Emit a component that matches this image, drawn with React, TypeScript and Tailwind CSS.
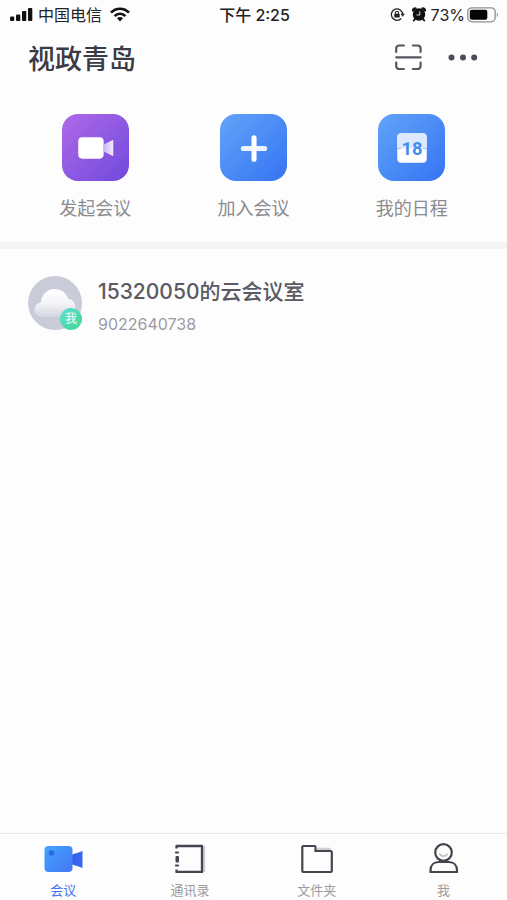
import React from 'react'

function SignalIcon() {
  return (
    <svg className="h-4 w-6" viewBox="0 0 24 16" fill="#111" aria-hidden="true">
      <rect x="0" y="9.5" width="4.3" height="4.5" rx="1" />
      <rect x="6" y="7.5" width="4.3" height="6.500" rx="1" />
      <rect x="12" y="4" width="4.3" height="10" rx="1" />
      <rect x="18" y="1" width="4.3" height="13" rx="1" />
    </svg>
  )
}

function WifiIcon() {
  return (
    <svg className="h-4 w-5" viewBox="0 0 20 16" fill="none" stroke="#111" strokeWidth="2.6" aria-hidden="true">
      <path d="M1 5.7C6 .4 14 .4 19 5.7" />
      <path d="M4.6 9.1c3-3.1 7.8-3.1 10.8 0" />
      <path d="M10 14.500l-3-3.3c1.700-1.500 4.300-1.500 6 0z" fill="#111" stroke="none" />
    </svg>
  )
}

function RotationLockIcon() {
  return (
    <svg className="h-4 w-4" viewBox="0 0 16 16" fill="none" stroke="#222" strokeWidth="1.3" aria-hidden="true">
      <path d="M12.2 11.500a5.700 5.700 0 1 1 1.500-4.200" />
      <path d="M11.500 6.800h4.300l-2.100 2.900z" fill="#222" stroke="none" />
      <rect x="5.300" y="6.800" width="5.400" height="3.800" rx=".6" fill="#222" stroke="none" />
      <path d="M6.500 7V5.800a1.500 1.500 0 0 1 3 0V7" strokeWidth="1.1" />
    </svg>
  )
}

function AlarmIcon() {
  return (
    <svg className="h-4 w-4" viewBox="0 0 16 16" fill="#111" aria-hidden="true">
      <circle cx="8" cy="7.500" r="6.200" />
      <path d="M1.800 5a2.600 2.600 0 0 1 4.200-3.700zM14.200 5A2.600 2.600 0 0 0 10 1.300z" />
      <path d="M4 12l-1.200 1.500M12 12l1.200 1.500" stroke="#111" strokeWidth="2" strokeLinecap="round" />
      <path d="M8.800 4.300v3.700H5.600" fill="none" stroke="#ddd" strokeWidth="1" />
    </svg>
  )
}

function BatteryIcon() {
  return (
    <svg className="h-4 w-8" viewBox="0 0 32 16" aria-hidden="true">
      <rect x=".8" y=".8" width="27.4" height="14" rx="4.2" fill="none" stroke="#8f8f8f" strokeWidth="1.3" />
      <rect x="2.8" y="2.800" width="17.5" height="10" rx="2" fill="#050505" />
      <path d="M29.8 5.500c1.800.8 1.800 3.600 0 4.400z" fill="#999" />
    </svg>
  )
}

function ScanIcon() {
  return (
    <svg className="h-7 w-7" viewBox="0 0 28 28" fill="none" stroke="#55555f" strokeWidth="2.2" strokeLinecap="round" aria-hidden="true">
      <path d="M1.200 8V4.500a3 3 0 0 1 3-3h4.700M17.900 1.500h4.700a3 3 0 0 1 3 3V8M1.200 18.500V22a3 3 0 0 0 3 3h4.700M17.900 25h4.700a3 3 0 0 0 3-3v-3.500" />
      <path d="M1.200 13.300h24.400" />
    </svg>
  )
}

function MoreIcon() {
  return (
    <svg className="h-7 w-8" viewBox="0 0 32 28" fill="#4c4c56" aria-hidden="true">
      <circle cx="4.500" cy="13.500" r="3" />
      <circle cx="16" cy="13.500" r="3" />
      <circle cx="27.200" cy="13.500" r="3" />
    </svg>
  )
}

function StartIcon() {
  return (
    <svg className="h-full w-full" viewBox="0 0 66 66" aria-hidden="true">
      <defs>
        <linearGradient id="lens" x1="0" y1="0" x2="1" y2="0">
          <stop offset="0" stopColor="#c9b4f2" />
          <stop offset="1" stopColor="#f3edfd" />
        </linearGradient>
      </defs>
      <rect x="16" y="23" width="25" height="21" rx="4" fill="#fff" />
      <path d="M41 30l8.500-4.200c.6-.3 1 0 1 .6v14.200c0 .6-.4.9-1 .6L41 37z" fill="url(#lens)" />
    </svg>
  )
}

function JoinIcon() {
  return (
    <svg className="h-full w-full" viewBox="0 0 66 66" stroke="#fff" strokeWidth="5" strokeLinecap="round" aria-hidden="true">
      <path d="M23 34h21" opacity=".9" />
      <path d="M33.500 23.500v21" />
    </svg>
  )
}

function ScheduleIcon() {
  return (
    <svg className="h-full w-full" viewBox="0 0 66 66" aria-hidden="true">
      <rect x="19" y="19" width="29" height="29" rx="4" fill="#fff" />
      <path d="M23 19h21a4 4 0 0 1 4 4v11H19V23a4 4 0 0 1 4-4z" fill="#dce9fd" />
      <path d="M19 34h3.500M44.500 34H48" stroke="#a9cbf9" strokeWidth="1.500" />
      <text x="33.500" y="40.500" textAnchor="middle" fontSize="18" fontWeight="700" fill="#3f8df2" fontFamily="Roboto, sans-serif">
        18
      </text>
    </svg>
  )
}

function CloudIcon() {
  return (
    <svg className="h-full w-full" viewBox="0 0 54 54" aria-hidden="true">
      <defs>
        <linearGradient id="cloud" x1="0" y1="0" x2="0" y2="1">
          <stop offset="0" stopColor="#fff" />
          <stop offset=".5" stopColor="#f5f5f8" />
          <stop offset="1" stopColor="#d3d5df" />
        </linearGradient>
      </defs>
      <path
        d="M14 41c-4.500 0-7.500-3-7.500-7 0-4.200 3-7 6.500-7.500C13.500 18.500 19 13 26.500 13c6.500 0 11.500 3.500 13.500 9.500 4.500.8 7.500 4.500 7.500 9.500 0 5.500-3.500 9-8.500 9z"
        fill="url(#cloud)"
      />
    </svg>
  )
}

function MeetingTabIcon() {
  return (
    <svg className="h-8 w-10" viewBox="0 0 40 32" aria-hidden="true">
      <defs>
        <linearGradient id="camera" x1="0" y1="0" x2="1" y2="1">
          <stop offset="0" stopColor="#43a4fb" />
          <stop offset="1" stopColor="#4476f5" />
        </linearGradient>
      </defs>
      <path d="M28 14.200l11.500-4.200v17L28 22.800z" fill="#3767f0" />
      <path d="M28 14.200l5-1.900v12.400l-5-1.900z" fill="#3464e4" />
      <rect x="1.500" y="5" width="28" height="26" rx="4" fill="url(#camera)" />
      <circle cx="8.500" cy="12" r="2.800" fill="#2b6ae6" />
    </svg>
  )
}

function ContactsTabIcon() {
  return (
    <svg className="h-8 w-8" viewBox="0 0 32 32" fill="none" aria-hidden="true">
      <path d="M30 5v26" stroke="#d2d2d6" strokeWidth="2.500" />
      <path d="M2.500 7.500V5H28v26H2.500v-2.500" stroke="#45454f" strokeWidth="2.300" strokeLinejoin="round" />
      <path d="M2 11.500h2M2 24.500h2" stroke="#45454f" strokeWidth="2.200" strokeLinecap="round" />
      <rect x="1.500" y="15" width="3.500" height="6.500" rx="1" fill="#45454f" />
    </svg>
  )
}

function FolderTabIcon() {
  return (
    <svg className="h-8 w-8" viewBox="0 0 32 32" fill="none" aria-hidden="true">
      <path d="M16 8h13.500" stroke="#cfcfd4" strokeWidth="2.500" />
      <path
        d="M2.300 5h11.200a1 1 0 0 1 1 1v4h15a1.300 1.300 0 0 1 1.300 1.300v18.400a1.300 1.300 0 0 1-1.300 1.300H2.600a1.300 1.300 0 0 1-1.300-1.300V6a1 1 0 0 1 1-1z"
        stroke="#45454f"
        strokeWidth="2.200"
      />
    </svg>
  )
}

function MeTabIcon() {
  return (
    <svg className="h-8 w-8" viewBox="0 0 32 32" fill="none" stroke="#45454f" strokeWidth="2.200" aria-hidden="true">
      <circle cx="15.500" cy="11.500" r="8.300" />
      <path d="M11.500 12.500c1.500 3.500 6.500 3.500 8 0" stroke="#c0c0c6" strokeWidth="1.800" />
      <path d="M2.500 31v-1.500c0-5.500 3.500-8.500 8-8.500h10.500c4.500 0 8 3 8 8.500V31z" strokeLinejoin="round" />
    </svg>
  )
}

const ACTIONS = [
  { label: '发起会议', icon: <StartIcon />, color: 'from-[#b068e8] to-[#7049dc]' },
  { label: '加入会议', icon: <JoinIcon />, color: 'from-[#62a3f8] to-[#3673f3]' },
  { label: '我的日程', icon: <ScheduleIcon />, color: 'from-[#62a3f8] to-[#3673f3]' },
]

const TABS = [
  { label: '会议', icon: <MeetingTabIcon />, active: true },
  { label: '通讯录', icon: <ContactsTabIcon />, active: false },
  { label: '文件夹', icon: <FolderTabIcon />, active: false },
  { label: '我', icon: <MeTabIcon />, active: false },
]

export default function App() {
  return (
    <div className="flex min-h-screen flex-col bg-[#fdfdfd] font-[Inter,'Noto_Sans_CJK_SC',sans-serif]">
      {/* Status bar */}
      <div className="grid h-[30px] grid-cols-[1fr_auto_1fr] items-center pr-2 pl-2.5 text-base text-[#222]">
        <div className="flex items-center gap-1">
          <SignalIcon />
          <span>中国电信</span>
          <span className="ml-1">
            <WifiIcon />
          </span>
        </div>
        <span className="font-medium">下午 2:25</span>
        <div className="flex items-center justify-end gap-1">
          <RotationLockIcon />
          <span className="ml-0.5">
            <AlarmIcon />
          </span>
          <span className="flex items-center gap-0.5">
            <span>73%</span>
            <BatteryIcon />
          </span>
        </div>
      </div>

      {/* Title bar */}
      <header className="flex h-14 items-center justify-between px-7">
        <h1 className="pt-1 text-[27px] font-medium text-[#3b3b45]">视政青岛</h1>
        <div className="flex items-center gap-6">
          <button type="button" aria-label="扫一扫">
            <ScanIcon />
          </button>
          <button type="button" aria-label="更多">
            <MoreIcon />
          </button>
        </div>
      </header>

      {/* Quick actions */}
      <section className="grid grid-cols-3 border-b-[7px] border-[#f4f4f4] px-4 pt-7 pb-[19px]">
        {ACTIONS.map((action) => (
          <button key={action.label} type="button" className="flex flex-col items-center gap-3.5">
            <span className={`h-[67px] w-[67px] rounded-2xl bg-linear-to-br ${action.color}`}>{action.icon}</span>
            <span className="text-lg leading-7 text-[#8b8b90]">{action.label}</span>
          </button>
        ))}
      </section>

      {/* Rooms */}
      <main className="flex-1 pt-[27px]">
        <button type="button" className="flex w-full items-start gap-4 px-7 text-left">
          <span className="relative h-[54px] w-[54px] rounded-full bg-[#c9cbd8]">
            <CloudIcon />
            <span className="absolute right-0 bottom-0 flex h-[22px] w-[22px] items-center justify-center rounded-full bg-linear-to-br from-[#5fe0cf] to-[#3fd597] text-xs text-white">
              我
            </span>
          </span>
          <span className="flex flex-col">
            <span className="text-[21px] leading-8 font-medium text-[#5a5a62]">15320050的云会议室</span>
            <span className="text-base leading-8 text-[#9b9ba1]">9022640738</span>
          </span>
        </button>
      </main>

      {/* Tab bar */}
      <nav className="grid grid-cols-4 border-t border-[#e8e8ea] pt-[7px]">
        {TABS.map((tab) => (
          <button
            key={tab.label}
            type="button"
            className={`flex flex-col items-center gap-[7px] text-[13px] leading-5 ${tab.active ? 'text-[#4474ee]' : 'text-[#9b9ba0]'}`}
          >
            {tab.icon}
            <span>{tab.label}</span>
          </button>
        ))}
      </nav>
    </div>
  )
}
